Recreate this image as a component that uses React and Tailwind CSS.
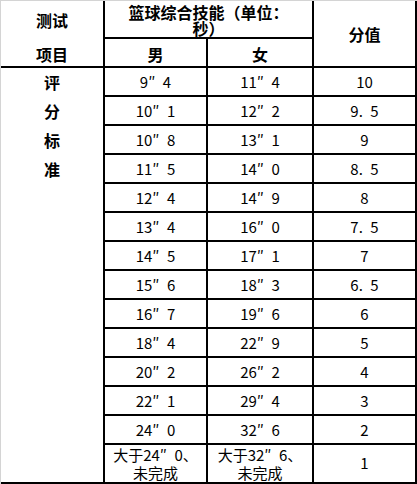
import React from "react";

const S = "\u2002";

const rows = [
  ["9″" + S + "4", "11″" + S + "4", "10"],
  ["10″" + S + "1", "12″" + S + "2", "9." + S + "5"],
  ["10″" + S + "8", "13″" + S + "1", "9"],
  ["11″" + S + "5", "14″" + S + "0", "8." + S + "5"],
  ["12″" + S + "4", "14″" + S + "9", "8"],
  ["13″" + S + "4", "16″" + S + "0", "7." + S + "5"],
  ["14″" + S + "5", "17″" + S + "1", "7"],
  ["15″" + S + "6", "18″" + S + "3", "6." + S + "5"],
  ["16″" + S + "7", "19″" + S + "6", "6"],
  ["18″" + S + "4", "22″" + S + "9", "5"],
  ["20″" + S + "2", "26″" + S + "2", "4"],
  ["22″" + S + "1", "29″" + S + "4", "3"],
  ["24″" + S + "0", "32″" + S + "6", "2"],
];

const font = { fontFamily: '"Noto Sans CJK SC", "Liberation Sans", sans-serif' };

export default function App() {
  return (
    <div className="w-[417px] h-[484px] bg-white border-l border-t border-[#d4d4d4] text-black" style={font}>
      <div className="grid grid-cols-[102px_101px_104px_101px] grid-rows-[36px_27px_repeat(13,27px)_37px] gap-[2px] bg-black pr-[2px] pb-[2px]">
        {/* header */}
        <div className="row-span-2 bg-white flex flex-col font-bold text-[16px]">
          <div className="h-[38px] flex items-center justify-center">测试</div>
          <div className="flex-1 flex items-center justify-center pt-[3px]">项目</div>
        </div>
        <div className="col-span-2 bg-white flex flex-col items-center justify-end font-bold text-[16px] leading-[16px] pb-[1px]">
          <span>篮球综合技能（单位：</span>
          <span>秒）</span>
        </div>
        <div className="row-span-2 bg-white flex items-center justify-center font-bold text-[16px]">分值</div>
        <div className="bg-white flex items-center justify-center font-bold text-[16px] pt-[3px]">男</div>
        <div className="bg-white flex items-center justify-center font-bold text-[16px] pt-[3px]">女</div>

        {/* col 1 data */}
        <div className="row-[3/span_14] col-start-1 bg-white flex flex-col items-center font-bold text-[16px] leading-[29px]">
          <span>评</span>
          <span>分</span>
          <span>标</span>
          <span>准</span>
        </div>

        {rows.map((r, i) => (
          <React.Fragment key={i}>
            <div className="bg-white flex items-center justify-center text-[15px] pt-[1px]">{r[0]}</div>
            <div className="bg-white flex items-center justify-center text-[15px] pt-[1px]">{r[1]}</div>
            <div className="bg-white flex items-center justify-center text-[15px] pt-[1px]">{r[2]}</div>
          </React.Fragment>
        ))}

        <div className="bg-white flex flex-col items-center justify-center text-[15px] leading-[18px]">
          <span>{"大于24″" + S + "0、"}</span>
          <span>未完成</span>
        </div>
        <div className="bg-white flex flex-col items-center justify-center text-[15px] leading-[18px]">
          <span>{"大于32″" + S + "6、"}</span>
          <span>未完成</span>
        </div>
        <div className="bg-white flex items-center justify-center text-[15px]">1</div>
      </div>
    </div>
  );
}
